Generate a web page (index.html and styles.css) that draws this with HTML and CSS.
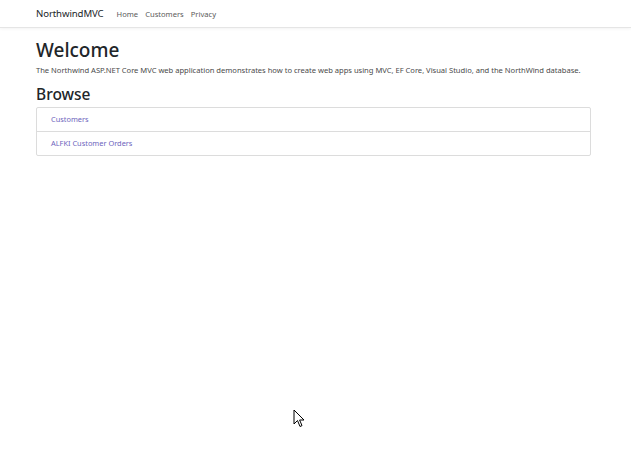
FILE: index.html
```html
<!DOCTYPE html>
<html lang="en">
<head>
<meta charset="utf-8">
<title>NorthwindMVC</title>
<link rel="stylesheet" href="styles.css">
</head>
<body>
<header class="navbar">
  <div class="container nav-inner">
    <a class="brand" href="#">NorthwindMVC</a>
    <nav class="nav-links">
      <a href="#">Home</a>
      <a href="#">Customers</a>
      <a href="#">Privacy</a>
    </nav>
  </div>
</header>
<main class="container main">
  <h1 class="title">Welcome</h1>
  <p class="lead">The Northwind ASP.NET Core MVC web application demonstrates how to create web apps using MVC, EF Core, Visual Studio, and the NorthWind database.</p>
  <h2 class="subtitle">Browse</h2>
  <div class="list-group">
    <a class="list-item" href="#">Customers</a>
    <a class="list-item" href="#">ALFKI Customer Orders</a>
  </div>
</main>
<svg class="cursor" width="13" height="20" viewBox="0 0 13 20">
  <path d="M1 1 L1 15 L4.5 11.5 L7 17.5 L9 16.6 L6.6 11 L11 11 Z" fill="#fff" stroke="#000" stroke-width="1" stroke-linejoin="miter"/>
</svg>
</body>
</html>
```
FILE: styles.css
```css
* { box-sizing: border-box; }
html, body { margin: 0; padding: 0; }
body {
  font-family: "Noto Sans", "Open Sans", sans-serif;
  color: #212529;
  background: #fff;
  width: 631px;
  height: 456px;
  position: relative;
  overflow: hidden;
}
a { text-decoration: none; }
.container {
  width: 555px;
  margin-left: 36px;
}
.navbar {
  height: 28px;
  border-bottom: 1px solid #e5e5e5;
  box-shadow: 0 1px 3px rgba(0,0,0,0.05);
}
.nav-inner {
  display: flex;
  align-items: center;
  height: 27px;
}
.brand {
  font-size: 9.6px;
  color: #212529;
  letter-spacing: -0.1px;
  margin-right: 13px;
}
.nav-links {
  display: flex;
  gap: 7px;
}
.nav-links a {
  font-size: 7.6px;
  color: #5a5a5a;
}
.main {
  padding-top: 10px;
}
.title {
  font-size: 19px;
  font-weight: 500;
  margin: 0;
  line-height: 24px;
}
.lead {
  font-size: 7.6px;
  margin: 3px 0 0;
  line-height: 10px;
  color: #4a4a4a;
  letter-spacing: -0.02px;
}
.subtitle {
  font-size: 15.5px;
  font-weight: 500;
  margin: 10px 0 0;
  line-height: 19px;
}
.list-group {
  margin-top: 3px;
  border: 1px solid #dcdcdc;
  border-radius: 2px;
  display: flex;
  flex-direction: column;
}
.list-item {
  display: block;
  height: 23px;
  line-height: 23px;
  padding-left: 14px;
  font-size: 7.4px;
  color: #6e64bd;
}
.list-item + .list-item {
  height: 24px;
  border-top: 1px solid #dcdcdc;
}
.cursor {
  position: absolute;
  left: 293px;
  top: 409px;
}
```
